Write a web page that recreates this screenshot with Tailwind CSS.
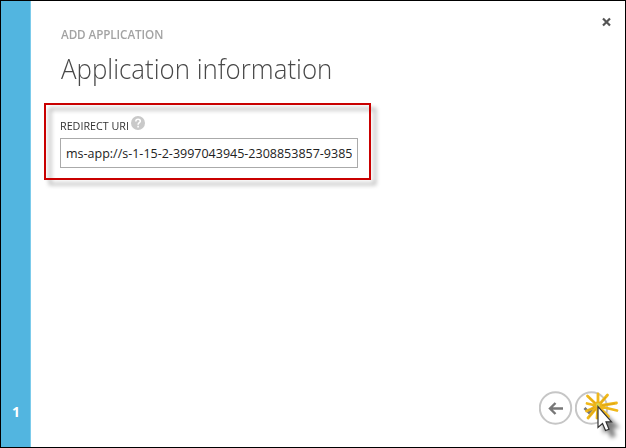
<!DOCTYPE html>
<html lang="en">
<head>
<meta charset="utf-8">
<title>Add application</title>
<script src="https://cdn.jsdelivr.net/npm/@tailwindcss/browser@4"></script>
</head>
<body class="h-[448px] w-[626px] overflow-hidden bg-white font-['Open_Sans','Noto_Sans',sans-serif]">
<div class="relative flex h-full w-full border border-black">
  <aside class="flex w-[30px] flex-col justify-end border-r border-[#7ccbeb] bg-[#52b5e0] pb-[25px] pl-px text-center text-[14px] leading-5 font-bold text-white">
    <span>1</span>
  </aside>
  <main class="flex flex-1 flex-col">
    <header class="flex justify-between pt-[16px] pr-[14px] pl-[30px]">
      <div>
        <p class="mt-[9px] origin-left scale-x-[.975] text-[12px] leading-[18px] font-semibold tracking-[-0.1px] whitespace-nowrap text-[#a3a3a3]">ADD APPLICATION</p>
        <h1 class="mt-[5px] w-[300px] origin-left scale-x-[.924] text-[28px] leading-[38px] font-light whitespace-nowrap text-[#484848]">Application information</h1>
      </div>
      <button class="h-[10px] w-[9px]" aria-label="Close">
        <svg class="block" width="9" height="10" viewBox="0 0 9 10" fill="none" stroke="#555" stroke-width="2.2"><path d="M1 1.5 8 8.5M8 1.5 1 8.5"/></svg>
      </button>
    </header>
    <section class="relative mt-[16px] ml-[13px] h-[77px] w-[327px] pt-[13px] pl-[16px]">
      <div class="absolute inset-0 border-2 border-[#c90000] drop-shadow-[5px_5px_2px_rgba(0,0,0,0.35)]"></div>
      <div class="relative">
        <label class="flex h-[21px] items-start text-[11.5px] leading-[20px] font-medium text-[#333]">
          <span class="w-[71px] origin-left scale-x-[.935] whitespace-nowrap">REDIRECT URI</span>
          <svg class="block" width="14" height="14" viewBox="0 0 14 14"><circle cx="7" cy="7" r="7" fill="#c9c9c9"/><path d="M4.8 5.4C4.8 2.5 9.3 2.7 9.3 5.2 9.3 6.8 7.1 6.7 7.1 8.7M7.1 9.8V11.4" fill="none" stroke="#fff" stroke-width="1.6"/></svg>
        </label>
        <div class="mt-[1px] h-[30px] w-[298px] border border-[#aaa] bg-white px-[5px]">
          <div class="overflow-hidden text-[12.5px] leading-[29px] whitespace-nowrap text-[#222]">ms-app://s-1-15-2-3997043945-2308853857-9385</div>
        </div>
      </div>
    </section>
    <footer class="mt-auto flex justify-end gap-[2px] pr-[16px] pb-[22px]">
      <button aria-label="Back"><svg class="block" width="34" height="34" viewBox="0 0 34 34" fill="none"><circle cx="16.500" cy="17" r="15.7" stroke="#c6c6c6" stroke-width="2"/><path d="M24 17.500H11M16.500 12 11 17.500 16.500 23" stroke="#777" stroke-width="2.4"/></svg></button>
      <button aria-label="Complete"><svg class="block" width="34" height="34" viewBox="0 0 34 34" fill="none"><circle cx="16.500" cy="17" r="15.7" stroke="#c6c6c6" stroke-width="2"/><path d="M9.500 17 14 21.500 23 12" stroke="#777" stroke-width="2.8"/></svg></button>
    </footer>
  </main>
  <svg class="absolute top-[387px] left-[574px]" width="50" height="59" viewBox="575 388 50 59">
    <defs><filter id="soft" x="-50%" y="-50%" width="200%" height="200%"><feGaussianBlur stdDeviation="2"/></filter></defs>
    <path d="M603 411V434L607 430 611 438 616 436 613 428H620Z" fill="#000" opacity=".5" filter="url(#soft)"/>
    <path d="M598 406 587.500 396M598 406V394M598 406 607.500 395M598 406 616.500 403M598 406 617 410.500M598 406 608.500 416.500M598 406 597 418M598 406 588 418M598 406 586.500 411M598 406 587 403.500" stroke="#f0b81a" stroke-width="2.800" stroke-linecap="round"/>
    <path d="M598 406 589 397.500M598 406 615 403.500M598 406 588 410.500M598 406 589 417M598 406 606 397" stroke="#d39b10" stroke-width=".7"/>
    <circle cx="598" cy="405.500" r="4" fill="#ecb41c"/>
    <circle cx="598" cy="405" r="2" fill="#d9d34c"/>
    <path d="M598 406.500V427.500L602.500 423.500 605.500 430.500 609 429.200 606 421.800H611.500Z" fill="#fff" stroke="#333" stroke-width="1.2"/>
  </svg>
</div>
</body>
</html>
